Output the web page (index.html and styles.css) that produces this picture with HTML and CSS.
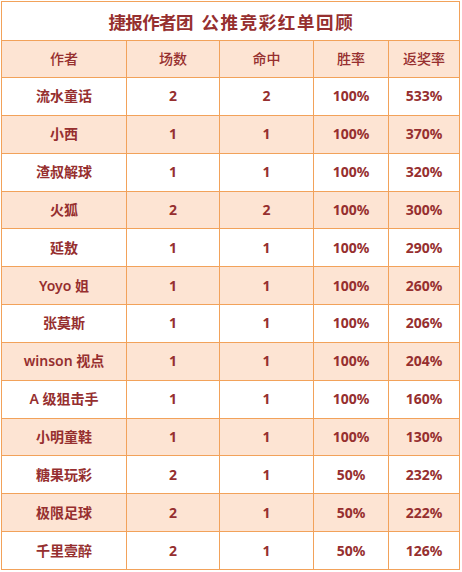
FILE: index.html
```html
<!DOCTYPE html>
<html lang="zh-CN">
<head>
<meta charset="utf-8">
<title>捷报作者团 公推竞彩红单回顾</title>
<link rel="stylesheet" href="styles.css">
</head>
<body>
<table class="report">
  <colgroup>
    <col class="c-author">
    <col class="c-games">
    <col class="c-hits">
    <col class="c-win">
    <col class="c-return">
  </colgroup>
  <tbody>
    <tr class="title-row"><td colspan="5"><span class="t1">捷报作者团</span> <span class="t2">公推竞彩红单回顾</span></td></tr>
    <tr class="head-row"><td>作者</td><td>场数</td><td>命中</td><td>胜率</td><td>返奖率</td></tr>
    <tr><td class="name">流水童话</td><td>2</td><td>2</td><td>100%</td><td>533%</td></tr>
    <tr class="alt"><td class="name">小西</td><td>1</td><td>1</td><td>100%</td><td>370%</td></tr>
    <tr><td class="name">渣叔解球</td><td>1</td><td>1</td><td>100%</td><td>320%</td></tr>
    <tr class="alt"><td class="name">火狐</td><td>2</td><td>2</td><td>100%</td><td>300%</td></tr>
    <tr><td class="name">延敖</td><td>1</td><td>1</td><td>100%</td><td>290%</td></tr>
    <tr class="alt"><td class="name">Yoyo 姐</td><td>1</td><td>1</td><td>100%</td><td>260%</td></tr>
    <tr><td class="name">张莫斯</td><td>1</td><td>1</td><td>100%</td><td>206%</td></tr>
    <tr class="alt"><td class="name">winson 视点</td><td>1</td><td>1</td><td>100%</td><td>204%</td></tr>
    <tr><td class="name">A 级狙击手</td><td>1</td><td>1</td><td>100%</td><td>160%</td></tr>
    <tr class="alt"><td class="name">小明童鞋</td><td>1</td><td>1</td><td>100%</td><td>130%</td></tr>
    <tr><td class="name">糖果玩彩</td><td>2</td><td>1</td><td>50%</td><td>232%</td></tr>
    <tr class="alt"><td class="name">极限足球</td><td>2</td><td>1</td><td>50%</td><td>222%</td></tr>
    <tr><td class="name">千里壹醉</td><td>2</td><td>1</td><td>50%</td><td>126%</td></tr>
  </tbody>
</table>
</body>
</html>
```
FILE: styles.css
```css
html, body {
  margin: 0;
  padding: 0;
  background: #ffffff;
}
body {
  padding: 1px 0 0 1px;
  font-family: "Noto Sans", "Noto Sans CJK SC", sans-serif;
  color: #962f2f;
}
.report {
  border-collapse: collapse;
  table-layout: fixed;
  width: 458px;
}
.c-author { width: 125px; }
.c-games { width: 93px; }
.c-hits { width: 94px; }
.c-win { width: 75px; }
.c-return { width: 71px; }
.report td {
  border: 1px solid #f2a25a;
  text-align: center;
  vertical-align: middle;
  padding: 0;
  font-size: 14px;
  font-weight: 700;
  line-height: 20px;
}
.report tr {
  height: 37.85px;
}
.report .title-row {
  height: 39px;
}
.report .title-row td {
  font-size: 17.5px;
  font-weight: 700;
  padding-top: 2px;
}
.t1 {
  letter-spacing: -0.6px;
}
.t2 {
  margin-left: 4px;
  letter-spacing: 1.6px;
  margin-right: -1.6px;
}
.report .head-row {
  height: 37px;
}
.report .head-row td {
  background: #fde4d3;
  font-weight: 500;
}
.report .alt td {
  background: #fde4d3;
}
.report td.name {
  font-weight: 600;
}
```
